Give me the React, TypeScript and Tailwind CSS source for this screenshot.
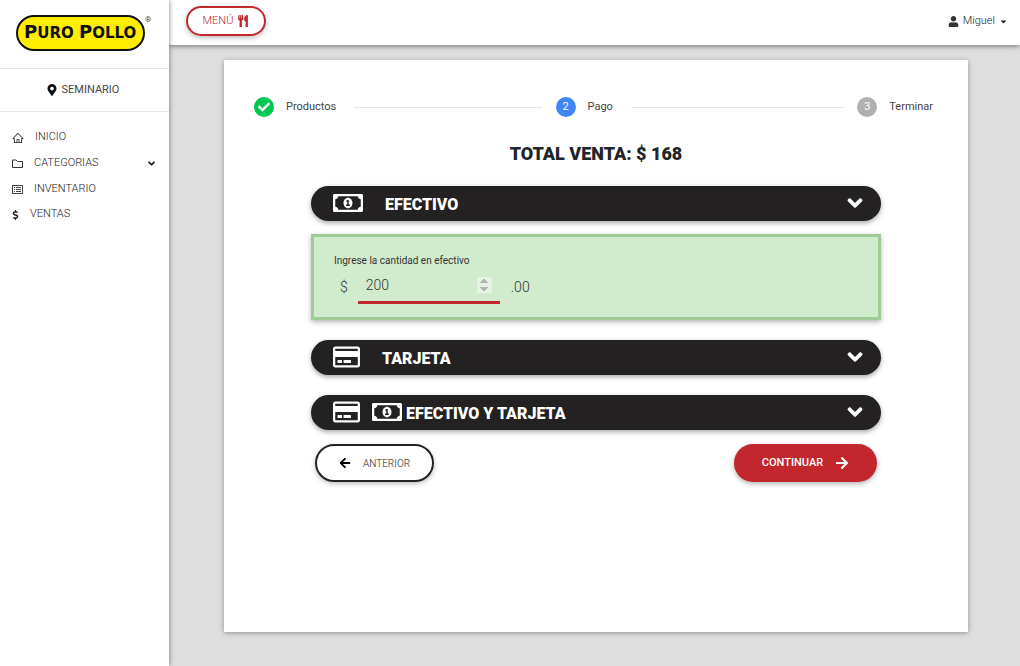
import React from 'react';
import {
    FaAngleDown,
    FaArrowLeft,
    FaArrowRight,
    FaCaretDown,
    FaCheck,
    FaDollarSign,
    FaMapMarkerAlt,
    FaRegCreditCard,
    FaRegMoneyBillAlt,
    FaUser,
    FaUtensils,
} from 'react-icons/fa';
import { AiOutlineHome } from 'react-icons/ai';

const Logo = () => {
    return (
        <svg width="140" height="40" viewBox="0 0 140 40" role="img" aria-label="Puro Pollo">
            <rect x="2" y="3" width="127" height="34" rx="17" fill="#ffed00" stroke="#111111" strokeWidth="2" />
            <text x="9" y="25" fontFamily="'DejaVu Sans', sans-serif" fontWeight="700" fontSize="18" fill="#111111">
                P<tspan fontSize="15">URO</tspan>
            </text>
            <text x="64" y="25" fontFamily="'DejaVu Sans', sans-serif" fontWeight="700" fontSize="18" fill="#111111">
                P<tspan fontSize="15">OLLO</tspan>
            </text>
            <text x="130" y="9" fontFamily="Roboto, sans-serif" fontSize="8" fill="#444444">
                ®
            </text>
        </svg>
    );
};

const FolderIcon = () => {
    return (
        <svg width="11" height="11" viewBox="0 0 11 11" fill="none" stroke="#333333" strokeLinejoin="round">
            <path d="M0.5 2h3.5l1.5 1.5h5V9.5h-10z" />
        </svg>
    );
};

const InventoryIcon = () => {
    return (
        <svg width="11" height="11" viewBox="0 0 11 11" fill="none" stroke="#444444">
            <rect x="0.5" y="1.5" width="10" height="8" />
            <path d="M2 3.5h1M4 3.5h5M2 5.5h1M4 5.5h5M2 7.5h1M4 7.5h5" />
        </svg>
    );
};

const Sidebar = () => {
    return (
        <aside className="z-20 flex w-[169px] shrink-0 flex-col bg-white shadow-[0_0_5px_rgba(0,0,0,0.5)]">
            <div className="flex h-[69px] items-start border-b border-gray-200 pt-[13px] pl-[15px]">
                <Logo />
            </div>
            <div className="flex h-[43px] items-center justify-center gap-1 border-b border-gray-200 pr-1 text-[11px] text-[#444444]">
                <FaMapMarkerAlt className="size-3 text-[#111111]" />
                SEMINARIO
            </div>
            <nav className="flex flex-col pt-[13px] text-[11px] font-light text-[#222222]">
                <a href="#inicio" className="flex h-[25px] items-center gap-[11px] px-3">
                    <AiOutlineHome className="size-3" />
                    INICIO
                </a>
                <a href="#categorias" className="flex h-[26px] items-center gap-[11px] px-3">
                    <FolderIcon />
                    CATEGORIAS
                    <FaAngleDown className="ml-auto size-[11px]" />
                </a>
                <a href="#inventario" className="flex h-[26px] items-center gap-[11px] px-3">
                    <InventoryIcon />
                    INVENTARIO
                </a>
                <a href="#ventas" className="flex h-[25px] items-center gap-[11px] px-3">
                    <FaDollarSign className="h-[10px] w-[7px]" />
                    VENTAS
                </a>
            </nav>
        </aside>
    );
};

const Header = () => {
    return (
        <header className="z-10 flex h-[45px] items-center justify-between bg-white pr-3 pb-[3px] pl-[17px] shadow-[0_1px_5px_rgba(0,0,0,0.5)]">
            <button className="flex h-[30px] w-[80px] items-center justify-center gap-1 rounded-full border-2 border-[#c1272d] text-[11px] font-light text-[#c1272d] shadow-[0_2px_5px_rgba(0,0,0,0.25)]">
                MENÚ
                <FaUtensils className="size-3" />
            </button>
            <button className="flex items-center gap-1 text-[11px] font-light text-[#222222]">
                <FaUser className="size-[11px] text-[#333333]" />
                Miguel
                <FaCaretDown className="size-[9px]" />
            </button>
        </header>
    );
};

const Step = ({ label, color, children }: { label: string; color: string; children: React.ReactNode }) => {
    return (
        <li className="flex items-center gap-3 text-[11px] text-[#444444]">
            <span className={`flex size-5 items-center justify-center rounded-full text-white ${color}`}>{children}</span>
            {label}
        </li>
    );
};

const Steps = () => {
    return (
        <ol className="flex items-center pr-[35px] pl-[30px]">
            <Step label="Productos" color="bg-[#00c851]">
                <FaCheck className="size-3" />
            </Step>
            <li className="mr-[14px] ml-[18px] h-px flex-[186] bg-gray-200" aria-hidden="true" />
            <Step label="Pago" color="bg-[#4285f4]">2</Step>
            <li className="mr-[14px] ml-[18px] h-px flex-[211] bg-gray-200" aria-hidden="true" />
            <Step label="Terminar" color="bg-[#b0b0b0]">3</Step>
        </ol>
    );
};

const PaymentBar = ({ title, gap, children }: { title: string; gap: string; children: React.ReactNode }) => {
    return (
        <button className="flex h-[35px] w-full items-center rounded-full bg-[#232121] pr-[14px] pb-px pl-[22px] text-white shadow-[0_2px_5px_rgba(0,0,0,0.35)]">
            {children}
            <span className={`pt-1 text-base font-black ${gap}`}>{title}</span>
            <FaAngleDown className="ml-auto size-6" />
        </button>
    );
};

const CashPanel = () => {
    return (
        <div className="mt-[13px] mb-5 flex h-[86px] flex-col border-[3px] border-[#9fcb97] bg-[#d1ebcd] px-5 pt-4 text-[#333333] shadow-[0_2px_5px_rgba(0,0,0,0.3)]">
            <label htmlFor="cash" className="text-[10px] leading-4">
                Ingrese la cantidad en efectivo
            </label>
            <div className="flex items-center pl-[6px] text-sm font-light">
                <span>$</span>
                <input
                    id="cash"
                    type="number"
                    defaultValue={200}
                    className="mr-[11px] ml-[10px] h-[35px] w-[142px] border-b-[3px] border-[#c1272d] bg-transparent px-2 outline-none [&::-webkit-inner-spin-button]:opacity-50"
                />
                <span>.00</span>
            </div>
        </div>
    );
};

const App = () => {
    return (
        <div className="flex min-h-screen bg-[#dedede] font-[Roboto,sans-serif]">
            <Sidebar />
            <div className="flex flex-1 flex-col">
                <Header />
                <main className="mt-[15px] mr-[52px] mb-[34px] ml-[55px] flex-1 bg-white pt-[37px] shadow-[0_1px_5px_rgba(0,0,0,0.35)]">
                    <Steps />
                    <h1 className="mt-[25px] text-center text-lg leading-6 font-black text-[#212529]">
                        TOTAL VENTA: $ 168
                    </h1>
                    <section className="mt-5 px-[87px]">
                        <PaymentBar title="EFECTIVO" gap="ml-[22px]">
                            <FaRegMoneyBillAlt className="h-6 w-[30px]" />
                        </PaymentBar>
                        <CashPanel />
                        <PaymentBar title="TARJETA" gap="ml-[22px]">
                            <FaRegCreditCard className="h-6 w-[27px]" />
                        </PaymentBar>
                        <div className="h-5" />
                        <PaymentBar title="EFECTIVO Y TARJETA" gap="ml-1">
                            <FaRegCreditCard className="mr-3 h-6 w-[27px]" />
                            <FaRegMoneyBillAlt className="h-6 w-[30px]" />
                        </PaymentBar>
                        <div className="mt-[14px] flex justify-between px-1">
                            <button className="flex h-[38px] w-[119px] items-center justify-center gap-3 rounded-full border-2 border-[#232121] text-[10px] font-light text-[#222222] shadow-[0_2px_5px_rgba(0,0,0,0.25)]">
                                <FaArrowLeft className="size-3 text-black" />
                                ANTERIOR
                            </button>
                            <button className="flex h-[38px] w-[143px] items-center justify-center gap-3 rounded-full bg-[#c1272d] text-[11px] font-medium text-white shadow-[0_2px_5px_rgba(0,0,0,0.3)]">
                                CONTINUAR
                                <FaArrowRight className="size-[14px]" />
                            </button>
                        </div>
                    </section>
                </main>
            </div>
        </div>
    );
};

export default App;
